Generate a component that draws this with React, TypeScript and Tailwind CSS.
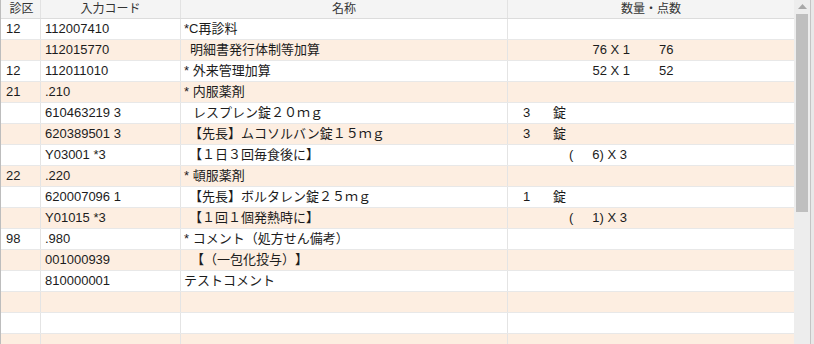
import React from "react";

type Row = {
  ku: string;
  code: string;
  name: string;
  indent: number;
  qty?: React.ReactNode;
};

const Pts = ({ a, b }: { a: string; b: string }) => (
  <div className="flex">
    <span className="w-[122px] text-right">{a}</span>
    <span className="ml-[29px]">{b}</span>
  </div>
);

const Unit = ({ n }: { n: string }) => (
  <div className="flex pl-[15px]">
    <span className="w-[30px]">{n}</span>
    <span>錠</span>
  </div>
);

const Times = ({ n }: { n: string }) => (
  <div className="flex pl-[61px]">
    <span className="w-[4px]">(</span>
    <span className="w-[54px] text-right">{n}) X 3</span>
  </div>
);

const rows: Row[] = [
  { ku: "12", code: "112007410", name: "*C再診料", indent: 3 },
  { ku: "", code: "112015770", name: "明細書発行体制等加算", indent: 9, qty: <Pts a="76 X 1" b="76" /> },
  { ku: "12", code: "112011010", name: "* 外来管理加算", indent: 3, qty: <Pts a="52 X 1" b="52" /> },
  { ku: "21", code: ".210", name: "* 内服薬剤", indent: 3 },
  { ku: "", code: "610463219 3", name: "レスプレン錠２０ｍｇ", indent: 12, qty: <Unit n="3" /> },
  { ku: "", code: "620389501 3", name: "【先長】ムコソルバン錠１５ｍｇ", indent: 8, qty: <Unit n="3" /> },
  { ku: "", code: "Y03001 *3", name: "【１日３回毎食後に】", indent: 8, qty: <Times n="6" /> },
  { ku: "22", code: ".220", name: "* 頓服薬剤", indent: 3 },
  { ku: "", code: "620007096 1", name: "【先長】ボルタレン錠２５ｍｇ", indent: 8, qty: <Unit n="1" /> },
  { ku: "", code: "Y01015 *3", name: "【１回１個発熱時に】", indent: 8, qty: <Times n="1" /> },
  { ku: "98", code: ".980", name: "* コメント（処方せん備考）", indent: 3 },
  { ku: "", code: "001000939", name: "【（一包化投与）】", indent: 10 },
  { ku: "", code: "810000001", name: "テストコメント", indent: 3 },
  { ku: "", code: "", name: "", indent: 3 },
  { ku: "", code: "", name: "", indent: 3 },
  { ku: "", code: "", name: "", indent: 3 },
];

export default function App() {
  return (
    <div
      className="w-[814px] h-[344px] overflow-hidden flex bg-white text-[13px] text-[#1c1c1c] [text-spacing-trim:space-all]"
      style={{ fontFamily: "'Liberation Sans', 'Noto Sans CJK JP', sans-serif" }}
    >
      <div className="flex-1 flex flex-col border-l border-[#bdbdbd] min-w-0">
        <div className="flex h-[19px] bg-[#f4f4f4] border-b border-[#dcdcdc] text-[12px] leading-[18px] text-[#333333] shrink-0">
          <div className="w-[40px] border-r border-[#e2e2e2] text-center pl-[2px]">診区</div>
          <div className="w-[140px] border-r border-[#e2e2e2] text-center">入力コード</div>
          <div className="w-[327px] border-r border-[#e2e2e2] text-center">名称</div>
          <div className="flex-1 text-center">数量・点数</div>
        </div>
        {rows.map((r, i) => (
          <div
            key={i}
            className={`flex h-[21px] shrink-0 border-b border-[#e8e8e8] leading-[20px] ${i % 2 === 1 ? "bg-[#fdeee1]" : "bg-white"}`}
          >
            <div className="w-[40px] border-r border-[#e4e4e4] pl-[5px]">{r.ku}</div>
            <div className="w-[140px] border-r border-[#e4e4e4] pl-[4px]">{r.code}</div>
            <div className="w-[327px] border-r border-[#e4e4e4] whitespace-pre" style={{ paddingLeft: r.indent }}>
              {r.name}
            </div>
            <div className="flex-1">{r.qty}</div>
          </div>
        ))}
      </div>
      <div className="w-[16px] bg-[#ededed] flex flex-col items-center shrink-0">
        <div className="h-[14px] flex items-center justify-center">
          <svg width="9" height="6" viewBox="0 0 9 6">
            <polygon points="4.5,0 9,5 0,5" fill="#a8a8a8" />
          </svg>
        </div>
        <div className="w-[12px] h-[198px] bg-[#bfbfbf]" />
      </div>
      <div className="w-[4px] border-l border-[#c4c4c4] bg-[#e8e8e8] shrink-0" />
    </div>
  );
}
